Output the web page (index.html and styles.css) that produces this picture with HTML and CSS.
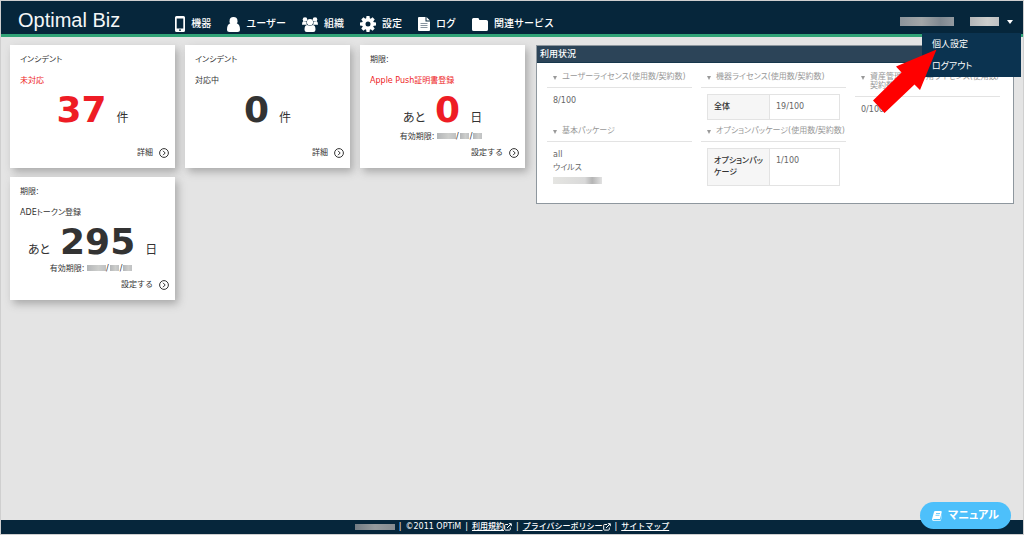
FILE: index.html
```html
<!DOCTYPE html>
<html lang="ja">
<head>
<meta charset="utf-8">
<meta name="viewport" content="width=device-width, initial-scale=1">
<title>Optimal Biz</title>
<link rel="stylesheet" href="styles.css">
</head>
<body>
<div class="page">
  <header class="header">
    <a class="brand" href="#">Optimal Biz</a>
    <nav class="nav">
      <a class="nav-item" href="#"><svg class="icon-phone" viewBox="0 0 10 16"><path fill="#fff" fill-rule="evenodd" d="M1.500 0h7Q10 0 10 1.500v13Q10 16 8.500 16h-7Q0 16 0 14.500v-13Q0 0 1.500 0zM1.700 2.500v10h6.600v-10zM4 13.500v1.300h2v-1.300z"/></svg>機器</a>
      <a class="nav-item" href="#"><svg class="icon-user" viewBox="0 0 13 15"><ellipse cx="6.500" cy="4.200" rx="4" ry="4.200" fill="#fff"/><path fill="#fff" d="M3 6.500C1 7 0 9 0 12.500Q0 15 2.500 15h8Q13 15 13 12.500C13 9 12 7 10 6.500Q6.500 9 3 6.500z"/></svg>ユーザー</a>
      <a class="nav-item" href="#"><svg class="icon-group" viewBox="0 0 16 15"><g fill="#fff"><circle cx="3" cy="2.500" r="2.300"/><circle cx="13" cy="2.500" r="2.300"/><path d="M0 7.500Q0 4.500 1.500 4q1.500 1.400 3 .7-.3 2 .6 3H1Q0 8 0 7.500zM16 7.500Q16 4.500 14.500 4q-1.500 1.400-3 .7.300 2-.6 3H15q1 .3 1-.2z"/><circle cx="8" cy="5.200" r="3.100"/><path d="M5 7.900Q2.500 8.200 2.500 12.700 2.500 15 4.700 15h6.600q2.200 0 2.200-2.300Q13.500 8.200 11 7.900 8 9.500 5 7.900z"/></g></svg>組織</a>
      <a class="nav-item" href="#"><svg class="icon-gear" viewBox="0 0 16 16"><g fill="#fff"><path id="tooth" d="M6.500 0h3l.5 3.500H6zM6 12.500h4L9.500 16h-3z"/><use href="#tooth" transform="rotate(45 8 8)"/><use href="#tooth" transform="rotate(90 8 8)"/><use href="#tooth" transform="rotate(135 8 8)"/></g><circle cx="8" cy="8" r="4.200" fill="none" stroke="#fff" stroke-width="3.400"/></svg>設定</a>
      <a class="nav-item" href="#"><svg class="icon-file" viewBox="0 0 12 14"><path fill="#fff" d="M1 0h6.500v4.500H12V13q0 1-1 1H1q-1 0-1-1V1q0-1 1-1zM8.500 0 12 3.500H8.500z"/><path stroke="#8995a0" d="M2.500 6.500h7M2.500 8.500h7M2.500 10.500h7"/></svg>ログ</a>
      <a class="nav-item" href="#"><svg class="icon-folder" viewBox="0 0 16 13"><path fill="#fff" d="M1.500 0h4.300Q7.300 0 7.300 2h7Q16 2 16 3.500v8q0 1.500-1.700 1.500H1.700Q0 13 0 11.500V1.500Q0 0 1.500 0z"/></svg>関連サービス</a>
    </nav>
    <div class="account">
      <span class="mask mask-company"></span>
      <button class="account-button" type="button" aria-label="アカウント" aria-expanded="true"><span class="mask mask-user"></span><svg class="caret" viewBox="0 0 6 4"><path fill="#fff" d="M0 0h6L3 4z"/></svg></button>
      <div class="menu">
        <a class="menu-item" href="#">個人設定</a>
        <a class="menu-item" href="#">ログアウト</a>
        <svg class="pointer" viewBox="0 0 64 64"><path fill="#f00" d="M63.500.5 23 17.500 28.500 23.500 0 51.500 11.500 64 41.500 35.500 47 41z"/></svg>
      </div>
    </div>
  </header>

  <main class="main">
    <section class="cards">
      <article class="card">
        <p class="card-kind">インシデント</p>
        <p class="card-name alert">未対応</p>
        <p class="count"><strong class="number alert">37</strong><span>件</span></p>
        <p class="expiry"></p>
        <a class="more" href="#">詳細<svg class="icon-more" viewBox="0 0 10 10"><circle cx="5" cy="5" r="4.400"/><path d="m4 2.800 2.200 2.200L4 7.200"/></svg></a>
      </article>
      <article class="card">
        <p class="card-kind">インシデント</p>
        <p class="card-name">対応中</p>
        <p class="count"><strong class="number">0</strong><span>件</span></p>
        <p class="expiry"></p>
        <a class="more" href="#">詳細<svg class="icon-more" viewBox="0 0 10 10"><circle cx="5" cy="5" r="4.400"/><path d="m4 2.800 2.200 2.200L4 7.200"/></svg></a>
      </article>
      <article class="card">
        <p class="card-kind">期限:</p>
        <p class="card-name alert">Apple Push証明書登録</p>
        <p class="count"><span>あと</span><strong class="number alert">0</strong><span>日</span></p>
        <p class="expiry">有効期限: <i class="mask mask-year"></i>/<i class="mask mask-day"></i>/<i class="mask mask-day"></i></p>
        <a class="more" href="#">設定する<svg class="icon-more" viewBox="0 0 10 10"><circle cx="5" cy="5" r="4.400"/><path d="m4 2.800 2.200 2.200L4 7.200"/></svg></a>
      </article>
      <article class="card">
        <p class="card-kind">期限:</p>
        <p class="card-name">ADEトークン登録</p>
        <p class="count"><span>あと</span><strong class="number">295</strong><span>日</span></p>
        <p class="expiry">有効期限: <i class="mask mask-year"></i>/<i class="mask mask-day"></i>/<i class="mask mask-day"></i></p>
        <a class="more" href="#">設定する<svg class="icon-more" viewBox="0 0 10 10"><circle cx="5" cy="5" r="4.400"/><path d="m4 2.800 2.200 2.200L4 7.200"/></svg></a>
      </article>
    </section>

    <section class="usage">
      <h2 class="usage-title">利用状況</h2>
      <div class="usage-body">
        <div class="usage-column">
          <div class="block">
            <h3 class="block-title">ユーザーライセンス(使用数/契約数)</h3>
            <p class="value">8/100</p>
          </div>
          <div class="block">
            <h3 class="block-title">基本パッケージ</h3>
            <p class="value">all<br>ウイルス</p>
            <span class="mask mask-package"></span>
          </div>
        </div>
        <div class="usage-column">
          <div class="block">
            <h3 class="block-title">機器ライセンス(使用数/契約数)</h3>
            <table class="table"><tr><th scope="row">全体</th><td>19/100</td></tr></table>
          </div>
          <div class="block">
            <h3 class="block-title">オプションパッケージ(使用数/契約数)</h3>
            <table class="table"><tr><th scope="row">オプションパッケージ</th><td>1/100</td></tr></table>
          </div>
        </div>
        <div class="usage-column">
          <div class="block">
            <h3 class="block-title">資産管理端末専用ライセンス(使用数/契約数)</h3>
            <p class="value">0/100</p>
          </div>
        </div>
      </div>
    </section>
  </main>

  <footer class="footer">
    <span class="mask mask-footer"></span><span>|</span><span>©2011 OPTiM</span><span>|</span>
    <span class="external"><a href="#">利用規約</a><svg class="icon-external" viewBox="0 0 8 8"><path d="M4 1.500H1.500Q.7 1.500.7 2.300v4q0 .8.800.8h4q.8 0 .8-.8V4.500M3 5 7 1M4.800.7h2.500v2.500"/></svg></span><span>|</span>
    <span class="external"><a href="#">プライバシーポリシー</a><svg class="icon-external" viewBox="0 0 8 8"><path d="M4 1.500H1.500Q.7 1.500.7 2.300v4q0 .8.800.8h4q.8 0 .8-.8V4.500M3 5 7 1M4.800.7h2.500v2.500"/></svg></span><span>|</span>
    <a href="#">サイトマップ</a>
  </footer>
  <a class="manual" href="#"><svg class="icon-book" viewBox="0 0 10 10"><path fill="#fff" d="M3.200 0h5.600Q10 0 9.700 1.200L8 8H2q-1 0-.7.700l.5.600H8.500L10 3v1L9 9q-.2 1-1 1H2Q0 10 0 8.300L2 1Q2.300 0 3.200 0z"/><path stroke="#4dc0fb" stroke-width=".8" d="M4 2.500h4M3.500 4.300h4"/></svg>マニュアル</a>
</div>
</body>
</html>
```
FILE: styles.css
```css
* {
  box-sizing: border-box;
}

body {
  margin: 0;
  color: #333;
  font-family: "DejaVu Sans", "Noto Sans CJK JP", sans-serif;
  font-size: 8px;
  font-feature-settings: "palt";
}

p,
h2,
h3 {
  margin: 0;
}

a {
  color: inherit;
}

.page {
  position: relative;
  display: flex;
  flex-direction: column;
  min-height: 100vh;
  border: 1px solid #cfcfcf;
  background: #e4e4e4;
}

.mask {
  display: inline-block;
  flex: none;
  background: linear-gradient(90deg, #b4b6b8, #cdcecc 60%, #bfc1c3);
}

/* Header */

.header {
  display: flex;
  align-items: flex-start;
  height: 36px;
  padding: 0 10px 0 17px;
  border-bottom: 3px solid #31a377;
  background: #06263b;
  color: #fff;
}

.brand {
  padding-top: 7px;
  font: 20px/24px "Liberation Sans", Arial, sans-serif;
  color: #f4f6f7;
  text-decoration: none;
}

.nav {
  display: flex;
  gap: 16px;
  padding-top: 15px;
  margin-left: 55px;
}

.nav-item {
  display: flex;
  align-items: center;
  gap: 6px;
  height: 16px;
  font-size: 10px;
  font-weight: 500;
  line-height: 16px;
  text-decoration: none;
  white-space: nowrap;
  font-feature-settings: normal;
}

.nav-item svg {
  flex: none;
}

.icon-phone {
  width: 10px;
  height: 16px;
}

.icon-user {
  width: 13px;
  height: 15px;
}

.icon-group {
  width: 16px;
  height: 15px;
}

.icon-gear {
  width: 16px;
  height: 16px;
}

.icon-file {
  width: 12px;
  height: 14px;
}

.icon-folder {
  width: 16px;
  height: 13px;
}

.account {
  position: relative;
  display: flex;
  align-items: center;
  gap: 16px;
  margin-left: auto;
  padding-top: 16px;
}

.account-button {
  display: flex;
  align-items: center;
  gap: 8px;
  padding: 0;
  border: 0;
  background: none;
}

.caret {
  width: 6px;
  height: 4px;
}

.mask-company {
  width: 54px;
  height: 9px;
  background: linear-gradient(90deg, #8c949b, #a2a6a8 40%, #7f8890 75%, #939aa0);
}

.mask-user {
  width: 29px;
  height: 9px;
}

.menu {
  position: absolute;
  z-index: 2;
  top: 32px;
  right: -8px;
  width: 99px;
  background: #0b3350;
}

.menu-item {
  display: block;
  padding: 0 10px;
  font-size: 9px;
  line-height: 22px;
  text-decoration: none;
}

.pointer {
  position: absolute;
  top: 16px;
  left: -49px;
  width: 64px;
  height: 64px;
}

/* Content */

.main {
  display: grid;
  grid-template-columns: minmax(0, 516fr) minmax(0, 478fr);
  align-items: start;
  gap: 10px;
  flex: 1;
  padding: 8px 9px;
}

.cards {
  display: grid;
  grid-template-columns: repeat(auto-fill, 165px);
  gap: 9px 10px;
}

.card {
  display: flex;
  flex-direction: column;
  padding: 7px 6px 6px 10px;
  background: #fff;
  box-shadow: 3px 4px 8px #aaa;
}

.card-kind {
  line-height: 16px;
}

.card-name {
  padding-top: 5px;
  line-height: 16px;
}

.alert {
  color: #ee1c25;
}

.count {
  display: flex;
  align-items: baseline;
  justify-content: center;
  gap: 10px;
  padding-right: 4px;
  font-size: 12px;
  line-height: 12px;
}

.number {
  font-size: 36px;
  line-height: 41px;
}

.expiry {
  height: 14px;
  padding-right: 6px;
  line-height: 14px;
  text-align: center;
}

.mask-year {
  width: 19px;
  height: 6px;
}

.mask-day {
  width: 9px;
  height: 6px;
  margin: 0 1px;
}

.more {
  display: flex;
  align-items: center;
  align-self: flex-end;
  gap: 6px;
  line-height: 18px;
  text-decoration: none;
  font-feature-settings: normal;
}

.icon-more {
  width: 10px;
  height: 10px;
  fill: none;
  stroke: #333;
}

/* Usage */

.usage {
  border: 1px solid #8e979e;
  background: #fff;
}

.usage-title {
  padding-left: 3px;
  border-bottom: 1px solid #17374c;
  background: #2c4458;
  color: #fff;
  font-size: 9px;
  font-weight: 500;
  line-height: 16px;
}

.usage-body {
  display: grid;
  grid-template-columns: repeat(3, minmax(0, 1fr));
  gap: 9px;
  padding: 5px 13px 17px 10px;
}

.usage-column {
  display: flex;
  flex-direction: column;
}

.block {
  min-height: 54px;
}

.block-title {
  position: relative;
  padding: 4px 0 6px 15px;
  border-bottom: 1px solid #e3e3e3;
  color: #999;
  font-size: 8px;
  font-weight: 400;
  line-height: 9px;
}

.block-title::before {
  position: absolute;
  top: 8px;
  left: 6px;
  border: 2px solid transparent;
  border-top: 4px solid #999;
  border-bottom: 0;
  content: "";
}

.value {
  padding: 6px 6px 0;
  color: #666;
  line-height: 13px;
}

.mask-package {
  width: 49px;
  height: 7px;
  margin: 3px 6px 0;
  background: linear-gradient(90deg, #e5e5e2, #d9d9d9 65%, #b5b5b5 80%, #e2e2e2);
}

.table {
  width: 133px;
  margin: 6px 0 0 6px;
  border-collapse: collapse;
  table-layout: fixed;
  line-height: 12px;
}

.table th,
.table td {
  padding: 6px;
  border: 1px solid #e3e3e3;
  text-align: left;
  vertical-align: top;
}

.table th {
  width: 62px;
  background: #f6f6f6;
  font-weight: 500;
}

.table td {
  color: #666;
}

/* Footer */

.footer {
  display: flex;
  align-items: center;
  justify-content: center;
  gap: 4px;
  height: 14px;
  background: #06263b;
  color: #fff;
  font-weight: 500;
  line-height: 14px;
  font-feature-settings: normal;
}

.external {
  display: flex;
  align-items: center;
}

.icon-external {
  width: 8px;
  height: 8px;
  fill: none;
  stroke: #fff;
}

.mask-footer {
  width: 40px;
  height: 6px;
  background: linear-gradient(90deg, #737c84, #959a9d 50%, #858b90);
}

.manual {
  position: absolute;
  right: 12px;
  bottom: 5px;
  display: flex;
  align-items: center;
  gap: 6px;
  padding: 0 12px;
  border-radius: 14px;
  background: #4dc0fb;
  color: #fff;
  font-size: 11px;
  font-weight: 700;
  line-height: 27px;
  text-decoration: none;
}

.icon-book {
  width: 10px;
  height: 10px;
}
```
